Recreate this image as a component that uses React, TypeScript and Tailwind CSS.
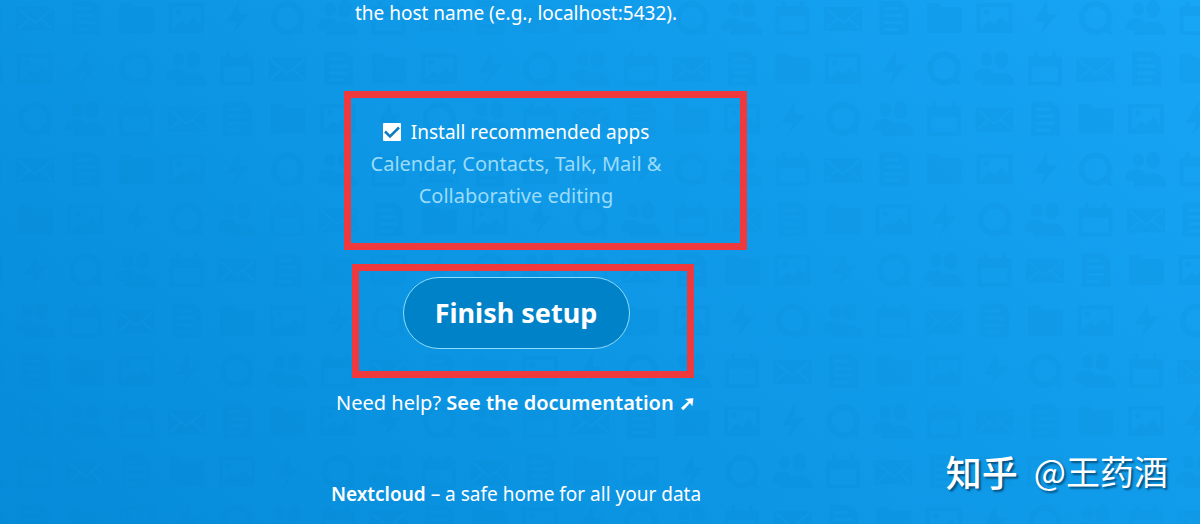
import React, { useState } from "react";

const icons = ["mail", "doc", "folder", "image", "bolt", "talk", "contacts", "calendar"];

// index of the first icon in every row of the wallpaper
const rowStarts = [0, 3, 5, 0, 2, 4, 6, 1, 5, 7, 1];

const WallpaperIcon = ({ name }: { name: string }) => {
  switch (name) {
    case "mail":
      return (
        <g>
          <path d="M-19 -11h38v24h-38z" />
          <path d="M-17 -9L0 5L17 -9M-17 11L-6 1M17 11L6 1" fill="none" stroke="#129bea" strokeWidth="2" />
        </g>
      );
    case "doc":
      return (
        <path
          fillRule="evenodd"
          d="M-14 -17H8L15 -10V17H-14ZM-9 -11V-8H5V-11ZM-9 -4V-1H9V-4ZM-9 3V6H9V3ZM-9 10V13H5V10Z"
        />
      );
    case "folder":
      return <path d="M-17 -13q0 -2 2 -2h9l4 4h18q2 0 2 2v22q0 2 -2 2h-31q-2 0 -2 -2z" />;
    case "image":
      return (
        <g>
          <path fillRule="evenodd" d="M-18 -15H18V15H-18ZM-14 -11V11H14V-11Z" />
          <circle cx="-8" cy="-6" r="3" />
          <path d="M-14 11L-5 2L0 6L7 -2L14 6V11Z" />
        </g>
      );
    case "bolt":
      return <path d="M2 -18L-11 4H0L-5 17L13 -4H3Z" />;
    case "talk":
      return (
        <path
          fillRule="evenodd"
          d="M0 -17A17 17 0 1 0 9 14.500L17 17L14.500 9A17 17 0 0 0 0 -17ZM0 -11A11 11 0 1 1 0 11A11 11 0 1 1 0 -11Z"
        />
      );
    case "contacts":
      return (
        <g>
          <ellipse cx="-8" cy="-9" rx="6" ry="7" />
          <path d="M-20 12q-2 -12 12 -12q8 0 8 12z" />
          <ellipse cx="7" cy="-9" rx="7" ry="9" />
          <path d="M-12 17q-1 -8 14 -13h9q10 4 9 13z" />
        </g>
      );
    default:
      return (
        <path
          fillRule="evenodd"
          d="M-17 -10q0 -2 2 -2h4v-5h4v5h14v-5h4v5h4q2 0 2 2v25q0 2 -2 2h-30q-2 0 -2 -2zM-13 -2V13H13V-2Z"
        />
      );
  }
};

const Wallpaper = () => (
  <svg className="absolute inset-0 h-full w-full" aria-hidden="true">
    <defs>
      <pattern id="apps" x="10" y="-7" width="404" height="555" patternUnits="userSpaceOnUse">
        {rowStarts.map((start, row) =>
          icons.map((_, col) => (
            <g
              key={`${row}-${col}`}
              fill="#0082c9"
              transform={`translate(${25 + col * 50.5} ${25 + row * 50.4})`}
            >
              <WallpaperIcon name={icons[(start + col) % icons.length]} />
            </g>
          ))
        )}
      </pattern>
    </defs>
    <rect width="100%" height="100%" fill="url(#apps)" opacity="0.13" />
  </svg>
);

const App = () => {
  const [installApps, setInstallApps] = useState(true);

  return (
    <div className="relative min-h-screen overflow-hidden bg-linear-[40deg,#058bd8,#17a5f5] font-['Noto_Sans','Noto_Sans_CJK_SC',sans-serif] text-[19px] text-white">
      <Wallpaper />

      <main className="relative flex w-[86%] flex-col items-center text-center">
        <p className="leading-[26px]">the host name (e.g., localhost:5432).</p>

        {/* Recommended apps */}
        <section className="relative mt-[90px] w-[320px] leading-8">
          <div className="flex items-center justify-center gap-2.5">
            <span className="grid size-[18px] place-items-center">
              <input
                id="install-apps"
                type="checkbox"
                checked={installApps}
                onChange={(e) => setInstallApps(e.target.checked)}
                className="col-start-1 row-start-1 size-[18px] appearance-none rounded-[1px] bg-white"
              />
              {installApps && (
                <svg viewBox="0 0 18 18" className="pointer-events-none col-start-1 row-start-1 size-[18px]">
                  <path d="M2 8.500l5 5l9 -9" fill="none" stroke="#0c7dc0" strokeWidth="2.500" />
                </svg>
              )}
            </span>
            <label htmlFor="install-apps">Install recommended apps</label>
          </div>
          <p className="text-xl leading-8 text-[#9bdcfb]">
            Calendar, Contacts, Talk, Mail &amp;
            <br />
            Collaborative editing
          </p>
          <div className="pointer-events-none absolute -top-[25px] -left-3 h-[159px] w-[403px] border-7 border-[#f0393c]" />
        </section>

        {/* Submit */}
        <div className="relative mt-[65px]">
          <button
            type="button"
            className="h-[72px] w-[227px] rounded-full border border-[#8fdcfb] bg-[#0082c9] text-[27px] font-bold"
          >
            Finish setup
          </button>
          <div className="pointer-events-none absolute -top-[13px] -left-[51px] h-[114px] w-[342px] border-7 border-[#f0393c]" />
        </div>

        <p className="mt-[38px] text-xl leading-8">
          Need help?{" "}
          <a href="#documentation" className="font-semibold">
            See the documentation ➚
          </a>
        </p>

        <footer className="mt-[59px] leading-8">
          <a href="#nextcloud" className="font-semibold">
            Nextcloud
          </a>{" "}
          – a safe home for all your data
        </footer>
      </main>

      {/* Watermark */}
      <div className="absolute right-8 bottom-7 flex items-center gap-4 font-['Noto_Sans_CJK_SC',sans-serif] text-[34px] leading-[50px] [text-shadow:2px_2px_2px_#05507e]">
        <span className="text-4xl leading-[50px] font-medium">知乎</span>
        <span>@王药酒</span>
      </div>
    </div>
  );
};

export default App;
